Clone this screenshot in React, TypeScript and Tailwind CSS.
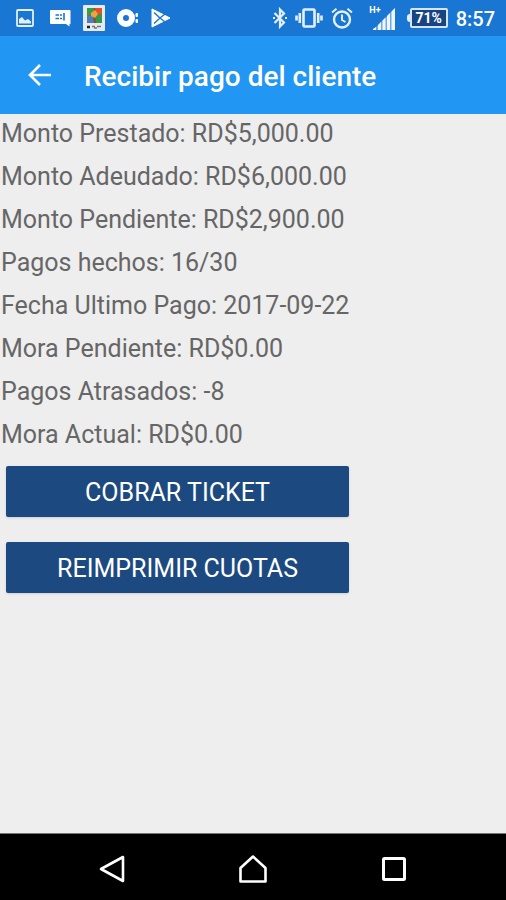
import React from "react";

type Detail = {
  label: string;
  value: string;
};

const details: Detail[] = [
  { label: "Monto Prestado", value: "RD$5,000.00" },
  { label: "Monto Adeudado", value: "RD$6,000.00" },
  { label: "Monto Pendiente", value: "RD$2,900.00" },
  { label: "Pagos hechos", value: "16/30" },
  { label: "Fecha Ultimo Pago", value: "2017-09-22" },
  { label: "Mora Pendiente", value: "RD$0.00" },
  { label: "Pagos Atrasados", value: "-8" },
  { label: "Mora Actual", value: "RD$0.00" },
];

const ImageIcon = () => (
  <svg width="18" height="18" viewBox="0 0 18 18" fill="none">
    <rect x="1" y="1" width="16" height="16" rx="1" stroke="#e3f0fc" strokeWidth="1.8" />
    <path d="M3 14.500V10l3-2 3 3.500 3-1.500 3 2.500v2Z" fill="#e3f0fc" />
  </svg>
);

const ChatIcon = () => (
  <svg width="21" height="18" viewBox="0 0 21 18">
    <path d="M1 1h18.500a1 1 0 0 1 1 1v13h-1v2.500L16 15H1a1 1 0 0 1-1-1V2a1 1 0 0 1 1-1Z" fill="#fff" />
    <path d="M5.500 6h3.500M5.500 9.500h3.500M10 6h2M10 9.500h2M14 4v7.500" stroke="#1976d2" strokeWidth="1.600" fill="none" />
  </svg>
);

const PhotoAppIcon = () => (
  <svg width="22" height="26" viewBox="0 0 22 26">
    <rect width="22" height="26" rx="1" fill="#e6ebf2" />
    <rect x="4" y="3" width="15" height="15" fill="#8b4a32" />
    <path d="M4 3h7v6l-7 2Z" fill="#3d9b45" />
    <path d="M12 3h7v6l-6 1Z" fill="#e2502c" />
    <path d="M4 11l6-1 1 8H4Z" fill="#4b7fb5" />
    <path d="M12 10l7-1v9h-6Z" fill="#37964a" />
    <path d="M8 8l4-3 3 4-3 4-4-2Z" fill="#f0a43d" />
    <path d="M4 22h3" stroke="#222" strokeWidth="2.500" />
    <path d="M9 21.500h3M11 23h3M14 21.500h4" stroke="#777" strokeWidth="1.500" />
  </svg>
);

const DiscIcon = () => (
  <svg width="22" height="18" viewBox="0 0 22 18" fill="#fff">
    <path d="M9 0a9 9 0 1 0 0 18A9 9 0 0 0 9 0Zm0 6a3 3 0 1 1 0 6 3 3 0 0 1 0-6Z" fillRule="evenodd" />
    <rect x="18.500" y="4" width="2.500" height="4" rx="1" />
    <rect x="18.500" y="10" width="2.500" height="4" rx="1" />
  </svg>
);

const PlayIcon = () => (
  <svg width="20" height="20" viewBox="0 0 20 20" fill="none">
    <path d="M1 1 19 10 1 19Z" fill="#fff" stroke="#fff" strokeLinejoin="round" />
    <path d="M3 4.500 9 10 3 15.500M9 10l5-4M9 10l5 4" stroke="#1976d2" strokeWidth="1.400" />
  </svg>
);

const BluetoothIcon = () => (
  <svg width="14" height="22" viewBox="0 0 14 22" fill="none" stroke="#e3f0fc" strokeWidth="2.200">
    <path d="M1.500 6 11 15.500 7 19.500V2.500L11 6.500 1.500 16" />
    <path d="M0 11h2M12 11h2" />
  </svg>
);

const VibrateIcon = () => (
  <svg width="28" height="22" viewBox="0 0 28 22" fill="none" stroke="#e3f0fc" strokeWidth="2.600">
    <rect x="8.500" y="2.500" width="11" height="17" rx="1" />
    <path d="M4.800 6v10M1.500 8.500v5M23.200 6v10M26.500 8.500v5" />
  </svg>
);

const AlarmIcon = () => (
  <svg width="22" height="22" viewBox="0 0 22 22" fill="none" stroke="#e3f0fc" strokeWidth="2.400">
    <circle cx="11" cy="12.500" r="8" />
    <path d="M11 7.500V13l3.500 2M1 5.500 5.500 1.800M21 5.500 16.500 1.800" strokeWidth="2" />
  </svg>
);

const SignalIcon = () => (
  <svg width="22" height="22" viewBox="0 0 22 22">
    <path d="M0 22 22 0v22Z" fill="#6fa8e4" />
    <path d="M0 22v-1l3-2v3ZM5 22v-5l3-3v8ZM9.500 22v-9.500l3-3V22ZM14 22V8l3-3v17ZM18.500 22V3.500L22 0v22Z" fill="#eef5fd" />
  </svg>
);

const StatusBar = () => (
  <div className="flex h-9 items-center justify-between bg-[#1976d2] pr-[11px] pl-4 text-white">
    <div className="flex items-center">
      <ImageIcon />
      <div className="ml-4">
        <ChatIcon />
      </div>
      <div className="ml-3">
        <PhotoAppIcon />
      </div>
      <div className="ml-3">
        <DiscIcon />
      </div>
      <div className="ml-3">
        <PlayIcon />
      </div>
    </div>
    <div className="flex items-center">
      <BluetoothIcon />
      <div className="ml-2">
        <VibrateIcon />
      </div>
      <div className="ml-2">
        <AlarmIcon />
      </div>
      <div className="ml-4 flex h-6 items-end">
        <span className="self-start text-[9px] leading-[8px] font-bold">H+</span>
        <div className="-ml-2">
          <SignalIcon />
        </div>
      </div>
      <div className="ml-3 flex items-center">
        <div className="h-2 w-[3px] rounded-l-sm bg-[#e3f0fc]" />
        <div className="flex h-5 w-[38px] items-center justify-center rounded-xs border-2 border-[#d5e5f7] bg-[#174583] text-[14px] leading-4 font-bold">
          71%
        </div>
      </div>
      <span className="ml-2 pt-0.5 text-[20px] leading-6 font-medium">8:57</span>
    </div>
  </div>
);

const AppBar = () => (
  <header className="flex h-[78px] items-center bg-[#2196f3] pl-6 text-white">
    <button type="button" aria-label="Atrás" className="p-1">
      <svg width="24" height="24" viewBox="0 0 24 24" fill="none" stroke="#fff" strokeWidth="2.600">
        <path d="M23 12H2M12 2 2 12l10 10" />
      </svg>
    </button>
    <h1 className="ml-7 pt-1 text-[28px] leading-8 font-medium">Recibir pago del cliente</h1>
  </header>
);

const NavigationBar = () => (
  <nav className="flex h-[67px] items-center justify-center gap-[113px] border-t border-[#777] bg-black pt-1">
    <button type="button" aria-label="Volver">
      <svg width="28" height="28" viewBox="0 0 28 28" fill="none" stroke="#fff" strokeWidth="2.600">
        <path d="M25 2v24L3 14Z" strokeLinejoin="round" />
      </svg>
    </button>
    <button type="button" aria-label="Inicio">
      <svg width="28" height="28" viewBox="0 0 28 28" fill="none" stroke="#fff" strokeWidth="2.600">
        <path d="M14 1.500 26.500 13v13.500h-25V13Z" strokeLinejoin="round" />
      </svg>
    </button>
    <button type="button" aria-label="Recientes">
      <svg width="28" height="28" viewBox="0 0 28 28" fill="none" stroke="#fff" strokeWidth="3">
        <rect x="3.500" y="3.500" width="21" height="21" rx="1" />
      </svg>
    </button>
  </nav>
);

const App: React.FC = () => {
  return (
    <div className="flex min-h-screen flex-col bg-[#eeeeee] font-['Roboto',sans-serif]">
      <StatusBar />
      <AppBar />
      <main className="flex-1">
        {details.map((detail) => (
          <p key={detail.label} className="h-[43px] pl-px text-[25px] leading-10 text-[#666]">
            {detail.label}: {detail.value}
          </p>
        ))}
        <div className="flex w-[69%] flex-col gap-[25px] pt-2 pl-1.5">
          <button type="button" className="h-[51px] rounded-xs bg-[#1c4a80] pt-0.5 text-[25px] text-white shadow-sm">
            COBRAR TICKET
          </button>
          <button type="button" className="h-[51px] rounded-xs bg-[#1c4a80] pt-0.5 text-[25px] text-white shadow-sm">
            REIMPRIMIR CUOTAS
          </button>
        </div>
      </main>
      <NavigationBar />
    </div>
  );
};

export default App;
